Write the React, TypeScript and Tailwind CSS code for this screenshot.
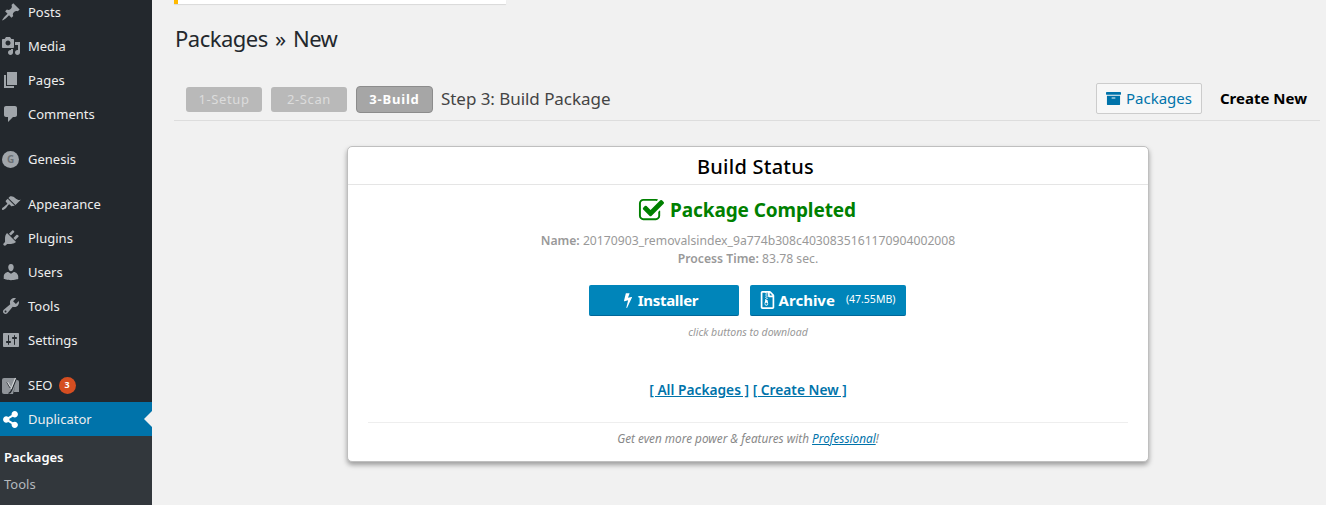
import { FaArchive, FaRegFileArchive, FaShareAlt } from 'react-icons/fa'
import type { ReactNode } from 'react'

const font = "font-['Noto_Sans','Open_Sans',sans-serif]"

function Dash({ d }: { d: string }) {
  return (
    <svg viewBox="0 0 20 20" className="h-5 w-5 fill-[#a0a5aa]">
      <path d={d} />
    </svg>
  )
}

const icons = {
  posts: 'M10.44 3.02l1.82-1.82 6.36 6.35-1.83 1.82c-1.05-.68-2.48-.57-3.41.36l-.75.75c-.92.93-1.04 2.35-.35 3.41l-1.83 1.82-2.41-2.41-2.8 2.79c-.42.42-3.38 2.71-3.8 2.29s1.86-3.39 2.28-3.81l2.79-2.79L4.1 9.36l1.83-1.82c1.05.69 2.48.57 3.4-.36l.75-.75c.93-.92 1.05-2.35.36-3.41z',
  media: 'M13 11V4c0-.55-.45-1-1-1h-1.67L9 1H5L3.67 3H2c-.55 0-1 .45-1 1v7c0 .55.45 1 1 1h10c.55 0 1-.45 1-1zM7 4.5c1.38 0 2.5 1.12 2.5 2.5S8.38 9.5 7 9.5 4.5 8.38 4.5 7 5.62 4.5 7 4.5zM14 6h5v10.5c0 1.38-1.12 2.5-2.5 2.5S14 17.88 14 16.5s1.12-2.5 2.5-2.5c.17 0 .34.02.5.05V9h-3V6zm-4 8.05V13h2v3.5c0 1.38-1.12 2.5-2.5 2.5S7 17.88 7 16.5 8.12 14 9.5 14c.17 0 .34.02.5.05z',
  pages: 'M6 15V2h10v13H6zm-1 1h8v2H3V5h2v11z',
  comments: 'M5 2h9c1.1 0 2 .9 2 2v7c0 1.1-.9 2-2 2h-2l-5 5v-5H5c-1.1 0-2-.9-2-2V4c0-1.1.9-2 2-2z',
  appearance: 'M14.48 11.06L7.41 3.99l1.5-1.5c.5-.56 2.3-.47 3.51.32 1.21.8 1.43 1.28 2.91 2.1 1.18.64 2.45 1.26 4.45.85zm-.71.71L6.7 4.7 4.93 6.47c-.39.39-.39 1.02 0 1.41l1.06 1.06c.39.39.39 1.03 0 1.42-.6.6-1.43 1.11-2.21 1.69-.35.26-.7.53-1.01.84C1.43 13.23.4 14.85 1.2 15.65s2.42-.23 3.76-1.58c.31-.31.58-.66.85-1.02.57-.78 1.08-1.61 1.69-2.21.39-.39 1.02-.39 1.41 0l1.06 1.06c.39.39 1.02.39 1.41 0z',
  plugins: 'M13.11 4.36L9.87 7.6 8 5.73l3.24-3.24c.35-.34 1.05-.2 1.56.32.52.51.66 1.21.31 1.55zm-8 1.77l.91-1.12 9.01 9.01-1.19.84c-.71.71-2.63 1.16-3.82 1.16H6.14L4.9 17.26c-.59.59-1.54.59-2.12 0-.59-.58-.59-1.53 0-2.12l1.24-1.24v-3.88c0-1.13.4-3.19 1.09-3.89zm7.26 3.97l3.24-3.24c.34-.35 1.04-.21 1.55.31.52.51.66 1.21.31 1.55l-3.24 3.25z',
  users: 'M10 9.25c-2.27 0-2.73-3.44-2.73-3.44C7 4.02 7.82 2 9.97 2c2.16 0 2.98 2.02 2.71 3.81 0 0-.41 3.44-2.68 3.44zm0 2.57L12.72 10c2.39 0 4.52 2.33 4.52 4.53v2.49s-3.65 1.13-7.24 1.13c-3.65 0-7.24-1.13-7.24-1.13v-2.49c0-2.25 1.94-4.48 4.47-4.48z',
  tools: 'M16.68 9.77c-1.34 1.34-3.3 1.67-4.95.99l-5.41 6.52c-.99.99-2.59.99-3.58 0s-.99-2.59 0-3.57l6.52-5.42c-.68-1.65-.35-3.61.99-4.95 1.28-1.28 3.12-1.62 4.72-1.06l-2.89 2.89 2.82 2.82 2.86-2.87c.53 1.58.18 3.39-1.08 4.67zM3.81 16.21c.4.39 1.04.39 1.43 0 .4-.4.4-1.04 0-1.43-.39-.4-1.03-.4-1.43 0-.39.39-.39 1.03 0 1.43z',
  settings: 'M18 16V4c0-.55-.45-1-1-1H3c-.55 0-1 .45-1 1v12c0 .55.45 1 1 1h14c.55 0 1-.45 1-1zM8 11h1c.55 0 1 .45 1 1s-.45 1-1 1H8v1.5c0 .28-.22.5-.5.5s-.5-.22-.5-.5V13H6c-.55 0-1-.45-1-1s.45-1 1-1h1V5.5c0-.28.22-.5.5-.5s.5.22.5.5V11zm5-2h-1c-.55 0-1-.45-1-1s.45-1 1-1h1V5.5c0-.28.22-.5.5-.5s.5.22.5.5V7h1c.55 0 1 .45 1 1s-.45 1-1 1h-1v5.5c0 .28-.22.5-.5.5s-.5-.22-.5-.5V9z',
}

const checkSquare =
  'M1472 930v318q0 119-84.5 203.5t-203.5 84.5h-832q-119 0-203.5-84.5t-84.5-203.5v-832q0-119 84.5-203.5t203.5-84.5h832q63 0 117 25 15 7 18 23 3 17-9 29l-49 49q-10 10-23 10-3 0-9-2-23-6-45-6h-832q-66 0-113 47t-47 113v832q0 66 47 113t113 47h832q66 0 113-47t47-113v-254q0-13 9-22l64-64q10-10 23-10 6 0 12 3 20 8 20 29zm231-489l-814 814q-24 24-57 24t-57-24l-430-430q-24-24-24-57t24-57l110-110q24-24 57-24t57 24l263 263 647-647q24-24 57-24t57 24l110 110q24 24 24 57t-24 57z'

const bolt =
  'M1333 566q18 20 7 44l-540 1157q-13 25-42 25-4 0-14-2-17-5-25.5-19t-4.5-30l197-808-406 101q-4 1-12 1-18 0-31-11-18-15-13-39l201-825q4-14 16-23t28-9h328q19 0 32 12.5t13 29.5q0 8-5 18l-171 463 396-98q8-2 12-2 19 0 34 15z'

function MenuItem({ icon, label, className = '', children }: { icon: ReactNode; label: string; className?: string; children?: ReactNode }) {
  return (
    <div className={`flex h-[34px] items-center ${className}`}>
      <span className="flex w-7 shrink-0 pl-px">{icon}</span>
      <span className="pt-[2px] text-[13px] text-[#eeeeee]">{label}</span>
      {children}
    </div>
  )
}

function Sidebar() {
  return (
    <aside className="flex h-[505px] w-[152px] shrink-0 flex-col overflow-hidden bg-[#23282d]">
      <div className="-mt-[5px]">
        <MenuItem icon={<Dash d={icons.posts} />} label="Posts" />
        <MenuItem icon={<Dash d={icons.media} />} label="Media" />
        <MenuItem icon={<Dash d={icons.pages} />} label="Pages" />
        <MenuItem icon={<Dash d={icons.comments} />} label="Comments" />
      </div>
      <div className="mt-[11px]">
        <MenuItem
          icon={
            <span className="ml-px flex h-[17px] w-[17px] items-center justify-center rounded-full bg-[#a0a5aa] text-[10px] font-bold text-[#6b7075]">
              G
            </span>
          }
          label="Genesis"
        />
      </div>
      <div className="mt-[11px]">
        <MenuItem icon={<Dash d={icons.appearance} />} label="Appearance" />
        <MenuItem icon={<Dash d={icons.plugins} />} label="Plugins" />
        <MenuItem icon={<Dash d={icons.users} />} label="Users" />
        <MenuItem icon={<Dash d={icons.tools} />} label="Tools" />
        <MenuItem icon={<Dash d={icons.settings} />} label="Settings" />
      </div>
      <div className="mt-[11px]">
        <MenuItem
          icon={
            <svg viewBox="0 0 20 20" className="h-5 w-5">
              <path d="M3 3h13L12 19H3a2 2 0 0 1-2-2V5a2 2 0 0 1 2-2z" className="fill-[#8f9499]" />
              <path d="M14 5h2a2 2 0 0 1 2 2v10h-5z" className="fill-[#8f9499]" />
              <path d="M6 7l3 5.5 M16.5 0.5L10.5 15.5c-.5 1.5-1.5 2.5-3 3" className="fill-none stroke-[#23282d] stroke-[1.3]" />
              <path d="M6.5 7l3 5 M14.5 3L10 14" className="fill-none stroke-[#d7dadc] stroke-[1.1]" />
            </svg>
          }
          label="SEO"
        >
          <span className="ml-[6px] flex h-[17px] w-[17px] items-center justify-center rounded-full bg-[#d54e21] text-[9px] font-bold text-white">
            3
          </span>
        </MenuItem>
        <div className="relative bg-[#0073aa]">
          <MenuItem icon={<FaShareAlt className="ml-px h-[17px] w-[17px] text-white" />} label="Duplicator" />
          <span className="absolute right-0 top-[9px] border-y-8 border-r-8 border-y-transparent border-r-[#f1f1f1]" />
        </div>
      </div>
      <div className="flex-1 bg-[#32373c] pl-1 pt-3 text-[13px] leading-[18px]">
        <p className="font-semibold text-white">Packages</p>
        <p className="mt-[9px] text-[#b4b9be]">Tools</p>
      </div>
    </aside>
  )
}

function Step({ label, active }: { label: string; active?: boolean }) {
  return active ? (
    <span className="flex h-[27px] w-[77px] items-center justify-center rounded-[4px] border border-[#8c8c8c] bg-[#a6a6a6] text-[13px] font-bold tracking-[0.8px] text-white">
      {label}
    </span>
  ) : (
    <span className="flex h-[25px] w-[76px] items-center justify-center rounded-[3px] bg-[#b9b9b9] text-[13px] tracking-[0.6px] text-[#dcdcdc]">
      {label}
    </span>
  )
}

export default function App() {
  return (
    <div className={`flex h-[505px] w-[1326px] overflow-hidden bg-[#f1f1f1] ${font}`}>
      <Sidebar />
      <main className="min-w-0 flex-1 pl-[22px] pr-[6px]">
        <div className="h-[4px] w-[332px] border-l-4 border-[#ffb900] bg-white shadow-[0_1px_1px_rgba(0,0,0,0.1)]" />
        <h1 className="mt-[18px] pl-px text-[22px] leading-[32px] tracking-[-0.5px] text-[#23282d] [word-spacing:2px]">Packages » New</h1>

        <div className="mt-[29px] flex h-[38px] items-center border-b border-[#dddddd] pb-[6px] pl-3">
          <div className="mt-[2px] flex items-center gap-[9px]">
            <Step label="1-Setup" />
            <Step label="2-Scan" />
            <Step label="3-Build" active />
          </div>
          <span className="ml-2 text-[17px] tracking-[-0.05px] text-[#444444]">Step 3: Build Package</span>
          <div className="ml-auto flex items-center">
            <a className="flex h-[31px] w-[106px] items-center justify-center gap-[5px] rounded-[2px] border border-[#cccccc] bg-[#f7f7f7] text-[15px] text-[#0073aa]">
              <FaArchive className="h-[15px] w-[15px]" />
              Packages
            </a>
            <span className="ml-[18px] mr-[13px] text-[15px] font-bold text-black">Create New</span>
          </div>
        </div>

        <section className="ml-[173px] mt-[25px] w-[802px] rounded-[5px] border border-[#bfbfbf] bg-white shadow-[0_3px_5px_rgba(0,0,0,0.35)]">
          <h2 className="flex h-[38px] items-center justify-center border-b border-[#e5e5e5] pl-[15px] pt-[2px] text-[20px] font-medium tracking-[0.25px] text-black">
            Build Status
          </h2>
          <div className="flex flex-col items-center px-5">
            <div className="mr-[2px] mt-[9px] flex h-[32px] items-center gap-[5px] text-[19px] font-bold tracking-[-0.1px] text-[#008000]">
              <svg viewBox="0 0 1792 1792" className="h-[27px] w-[27px] fill-[#008000]">
                <path d={checkSquare} />
              </svg>
              Package Completed
            </div>
            <p className="mt-[6px] text-[12.2px] leading-[18px] text-[#999999]">
              <b className="font-semibold">Name:</b> 20170903_removalsindex_9a774b308c4030835161170904002008
            </p>
            <p className="text-[12.2px] leading-[18px] text-[#999999]">
              <b className="font-semibold">Process Time:</b> 83.78 sec.
            </p>
            <div className="mr-[2px] mt-[17px] flex gap-[11px]">
              <a className="flex h-[31px] w-[150px] items-center justify-center gap-[2px] rounded-[2px] border-b border-[#006799] bg-[#0085ba] pr-[9px] text-[15px] font-bold tracking-[-0.3px] text-white">
                <svg viewBox="0 0 1792 1792" className="h-[16px] w-[16px] fill-white">
                  <path d={bolt} />
                </svg>
                Installer
              </a>
              <a className="flex h-[31px] w-[156px] items-center justify-center gap-1 rounded-[2px] border-b border-[#006799] bg-[#0085ba] text-[15px] font-bold text-white">
                <FaRegFileArchive className="h-[18px] w-[15px]" />
                Archive
                <span className="ml-[7px] text-[10.5px] font-normal">(47.55MB)</span>
              </a>
            </div>
            <p className="mt-[9px] text-[10.5px] italic leading-[14px] text-[#999999]">click buttons to download</p>
            <p className="mt-[42px] text-[13.75px] font-semibold leading-[18px] text-[#0073aa]">
              <a className="underline">[ All Packages ]</a> <a className="underline">[ Create New ]</a>
            </p>
            <div className="mt-[23px] w-[760px] border-t border-[#eeeeee] pt-[7px] text-center text-[11.75px] italic leading-[16px] text-[#888888]">
              Get even more power &amp; features with <a className="text-[#0073aa] underline">Professional</a>!
            </div>
            <div className="h-[15px]" />
          </div>
        </section>
      </main>
    </div>
  )
}
